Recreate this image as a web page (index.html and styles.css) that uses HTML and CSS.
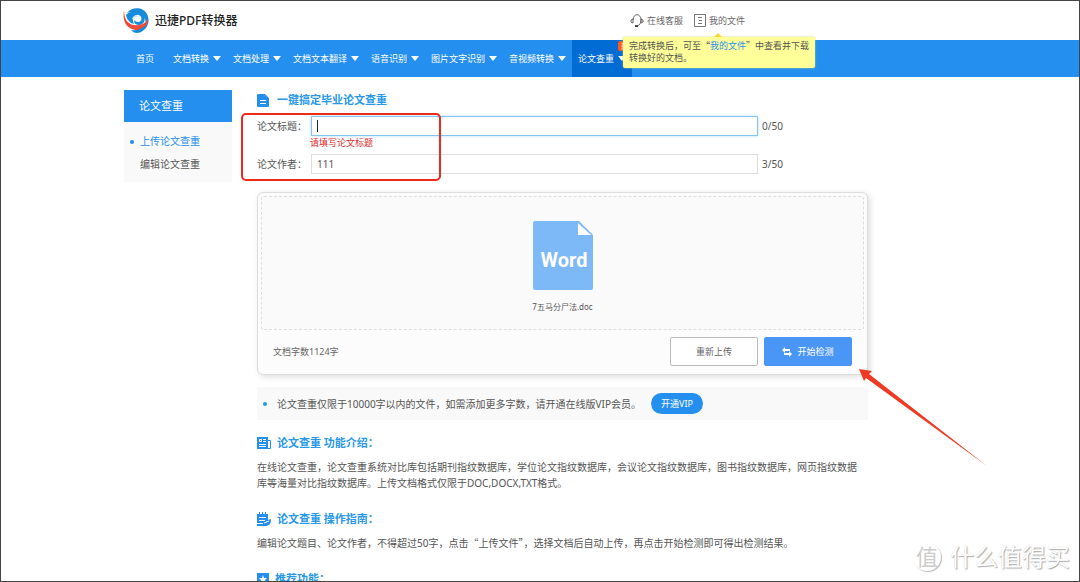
FILE: index.html
```html
<!DOCTYPE html>
<html lang="zh-CN">
<head>
<meta charset="utf-8">
<title>迅捷PDF转换器</title>
<link rel="stylesheet" href="styles.css">
</head>
<body>
<div class="page">
  <header class="header">
    <a class="brand" href="#">
      <svg class="brand-logo" viewBox="0 0 26 26" aria-hidden="true">
        <path fill="#168bd9" d="M4 5C8-1 20-2 24 6c4 8 0 17-9 19 6-4 9-9 7-14C19 4 10 3 4 5z"/>
        <path fill="#168bd9" d="M3 7c1 5 4 8 8 9-3-6 1-10 5-9 4 2 3 7-1 7-2 0-3-1-3-2-2 2 0 5 4 5 5 0 7-6 5-9C17 2 8 2 3 7z"/>
        <path fill="#d5ecfa" d="M9 11c1-4 6-5 8-2-3-1-5 0-6 3z"/>
        <path fill="#ee4b38" d="M1 2c0 8 3 14 10 15 6 1 11-1 14-6 0 7-5 12-12 11C4 21-1 14 1 2z"/>
        <path fill="#168bd9" d="M8 22c6 1 11-1 15-5-2 7-10 11-15 5z"/>
      </svg>
      <span>迅捷PDF转换器</span>
    </a>
    <div class="tools">
      <a class="tool" href="#">
        <svg class="tool-headset" viewBox="0 0 14 14" fill="none" stroke="#666" aria-hidden="true">
          <path d="M3 6c0-7 8-7 8 0 0 3-1 5-4 6M3 5L1 6v2l2 1zM11 5l2 1v2l-2 1z"/>
          <path fill="#444" stroke="none" d="M5 11h3v2H5z"/>
        </svg>
        <span>在线客服</span>
      </a>
      <a class="tool" href="#">
        <svg class="tool-doc" viewBox="0 0 12 13" fill="none" stroke="#777" aria-hidden="true">
          <path d="M.5.5h11v12H.5zM4 3.500h4M5 6.500h3M4 9.500h4"/>
        </svg>
        <span>我的文件</span>
      </a>
      <div class="tip" role="tooltip">
        <div class="tip-line"><span>完成转换后，可至<span class="quote">“</span></span><a href="#">我的文件</a><span><span class="quote">”</span>中查看并下载</span></div>
        <div class="tip-line">转换好的文档。</div>
      </div>
    </div>
  </header>

  <nav class="nav">
    <a class="nav-item nav-home" href="#">首页</a>
    <a class="nav-item has-menu" href="#">文档转换</a>
    <a class="nav-item has-menu" href="#">文档处理</a>
    <a class="nav-item has-menu" href="#">文档文本翻译</a>
    <a class="nav-item has-menu" href="#">语音识别</a>
    <a class="nav-item has-menu" href="#">图片文字识别</a>
    <a class="nav-item has-menu" href="#">音视频转换</a>
    <a class="nav-item has-menu active" href="#">论文查重<span class="badge">新</span></a>
  </nav>

  <div class="body">
    <aside class="sidebar">
      <h2 class="side-title">论文查重</h2>
      <ul class="side-list">
        <li class="current"><a href="#">上传论文查重</a></li>
        <li><a href="#">编辑论文查重</a></li>
      </ul>
    </aside>

    <main class="main">
      <h1 class="title">
        <svg class="icon-file" viewBox="0 0 12 13" aria-hidden="true">
          <path fill="#258ff0" d="M1 0h7l4 4v8a1 1 0 0 1-1 1H1a1 1 0 0 1-1-1V1a1 1 0 0 1 1-1z"/>
          <path stroke="#fff" d="M3 6.500h6M3 9.500h6"/>
        </svg>
        <span>一键搞定毕业论文查重</span>
      </h1>
      <form class="form">
        <div class="fields">
          <div class="row">
            <label for="paper-title">论文标题：</label>
            <div class="control focused"><span class="caret"></span><input id="paper-title" type="text"></div>
            <span class="count">0/50</span>
          </div>
          <p class="error">请填写论文标题</p>
          <div class="row">
            <label for="paper-author">论文作者：</label>
            <div class="control"><input id="paper-author" type="text" value="111"></div>
            <span class="count">3/50</span>
          </div>
          <div class="highlight"></div>
        </div>
        <section class="panel">
          <div class="drop">
            <svg class="word" viewBox="0 0 60 70" aria-hidden="true">
              <path fill="#7db8f7" d="M2 0h44l14 14v53a2 2 0 0 1-2 2H2a2 2 0 0 1-2-2V2a2 2 0 0 1 2-2z"/>
              <path fill="#fff" d="M45 2v12h13z"/>
              <text class="word-text" x="31" y="46" text-anchor="middle">Word</text>
            </svg>
            <span class="filename">7五马分尸法.doc</span>
          </div>
          <div class="actions">
            <span class="words">文档字数1124字</span>
            <button class="btn" type="button">重新上传</button>
            <button class="btn btn-primary" type="button">
              <svg class="icon-swap" viewBox="0 0 10 10" aria-hidden="true">
                <path fill="#fff" d="M0 3l3-3v2h5v2H3v2zM10 7L7 4v2H2v2h5v2z"/>
              </svg>
              <span>开始检测</span>
            </button>
          </div>
          <svg class="pointer" viewBox="0 0 128 98" aria-hidden="true">
            <path fill="#ee3a24" d="M0 0l13 2-3 3 118 92L7 9 5 12z"/>
          </svg>
        </section>
      </form>
      <div class="vip">
        <span>论文查重仅限于10000字以内的文件，如需添加更多字数，请开通在线版VIP会员。</span>
        <button class="vip-btn" type="button">开通VIP</button>
      </div>

      <section class="info">
        <h2 class="subtitle">
          <svg class="icon-sub" viewBox="0 0 14 14" aria-hidden="true">
            <path fill="#258ff0" d="M0 1h11v12H0z"/>
            <path fill="none" stroke="#258ff0" d="M11 4.500h2.500v8H9"/>
            <path fill="none" stroke="#fff" d="M2.500 3.500h2v2h-2zM6 3.500h3M6 5.500h3M2 8.500h7M2 10.500h7"/>
          </svg>
          <span>论文查重 功能介绍：</span>
        </h2>
        <p class="text">在线论文查重，论文查重系统对比库包括期刊指纹数据库，学位论文指纹数据库，会议论文指纹数据库，图书指纹数据库，网页指纹数据库等海量对比指纹数据库。上传文档格式仅限于DOC,DOCX,TXT格式。</p>
      </section>
      <section class="info">
        <h2 class="subtitle">
          <svg class="icon-sub" viewBox="0 0 14 14" aria-hidden="true">
            <path fill="#258ff0" d="M0 2h2V0h1v2h2V0h1v2h2V0h1v2h2v6l3-1c0 5-2 7-6 7H0v-2h6v-1H0z"/>
            <path stroke="#fff" d="M2 5.500h7M2 8.500h6M7 11l5-2"/>
          </svg>
          <span>论文查重 操作指南：</span>
        </h2>
        <p class="text">编辑论文题目、论文作者，不得超过50字，点击<span class="quote">“</span>上传文件<span class="quote">”</span>，选择文档后自动上传，再点击开始检测即可得出检测结果。</p>
      </section>
      <section class="info">
        <h2 class="subtitle">
          <svg class="icon-star" viewBox="0 0 12 13" aria-hidden="true">
            <path fill="#258ff0" d="M0 0h12v13H0z"/>
            <path fill="#fff" d="M6 2l1 3h3L8 7l1 3-3-2-3 2 1-3-2-2h3z"/>
          </svg>
          <span>推荐功能：</span>
        </h2>
      </section>
    </main>
  </div>

  <div class="watermark">
    <span class="mark">值</span>
    <span>什么值得买</span>
  </div>
</div>
</body>
</html>
```
FILE: styles.css
```css
* {
  box-sizing: border-box;
}

body {
  margin: 0;
  background: #fff;
  color: #555;
  font-family: "Noto Sans", "Noto Sans CJK SC", sans-serif;
  font-size: 10px;
  line-height: 16px;
}

h1, h2, p, ul {
  margin: 0;
  padding: 0;
}

a {
  color: inherit;
  text-decoration: none;
}

button, input {
  font: inherit;
  color: inherit;
}

svg {
  display: block;
  flex: none;
}

.quote {
  font-family: "Noto Sans CJK SC", sans-serif;
}

.page {
  position: relative;
  height: 100vh;
  overflow: hidden;
  border: 1px solid #444;
}

.header {
  display: flex;
  align-items: center;
  height: 39px;
  padding-left: 122px;
}

.brand {
  display: flex;
  align-items: center;
  gap: 6px;
  width: 507px;
  color: #222;
  font-size: 12px;
  font-weight: 500;
}

.brand-logo {
  width: 26px;
  height: 26px;
}

.tools {
  position: relative;
  display: flex;
  gap: 11px;
  color: #666;
  font-size: 9px;
}

.tool {
  display: flex;
  align-items: center;
  gap: 3px;
}

.tool-headset {
  width: 14px;
  height: 14px;
}

.tool-doc {
  width: 12px;
  height: 13px;
}

.tip {
  position: absolute;
  z-index: 2;
  top: 24px;
  left: -7px;
  width: 192px;
  padding: 3px 6px 4px;
  border-radius: 2px;
  background: #ffff99;
  box-shadow: 0 0 2px #cccc66;
  color: #555;
  line-height: 12px;
}

.tip-line {
  display: flex;
  white-space: nowrap;
}

.tip::before {
  content: "";
  position: absolute;
  top: -4px;
  left: 91px;
  border: 4px solid transparent;
  border-top: 0;
  border-bottom-color: #ffd52e;
}

.tip a {
  color: #258ff0;
}

.nav {
  display: flex;
  height: 37px;
  padding-left: 129px;
  background: #258ff0;
  color: #fff;
  font-size: 9px;
}

.nav-item {
  position: relative;
  display: flex;
  align-items: center;
  gap: 4px;
  padding: 0 6px;
  white-space: nowrap;
}

.nav-home {
  padding-right: 13px;
}

.has-menu::after {
  content: "";
  border: 4px solid transparent;
  border-top: 5px solid #fff;
  border-bottom: 0;
}

.active {
  background: #006cd4;
}

.badge {
  position: absolute;
  top: 1px;
  right: 0;
  width: 14px;
  border-radius: 2px;
  background: #ff5a1f;
  font-size: 8px;
  line-height: 10px;
  padding-left: 3px;
}

.body {
  display: flex;
  gap: 25px;
  max-width: 867px;
  padding: 13px 0 0 123px;
}

.sidebar {
  flex: none;
  width: 108px;
}

.side-title {
  padding: 8px 15px;
  background: #258ff0;
  color: #fff;
  font-size: 11px;
  font-weight: 400;
}

.side-list {
  padding: 8px 0 6px;
  background: #f9f9f9;
  list-style: none;
  line-height: 23px;
}

.side-list li {
  padding-left: 16px;
}

.side-list .current {
  display: flex;
  align-items: center;
  gap: 6px;
  padding-left: 6px;
  color: #258ff0;
}

.current::before {
  content: "";
  width: 4px;
  height: 4px;
  border-radius: 50%;
  background: #258ff0;
}

.main {
  flex: 1;
  min-width: 0;
}

.title, .subtitle {
  display: flex;
  align-items: center;
  gap: 8px;
  color: #2a98e8;
  font-size: 11px;
  font-weight: 700;
  line-height: 20px;
}

.icon-file, .icon-star {
  width: 12px;
  height: 13px;
}

.icon-sub {
  width: 14px;
  height: 14px;
}

.subtitle {
  gap: 6px;
}

.fields {
  position: relative;
  padding-top: 6px;
}

.row {
  display: flex;
  align-items: center;
}

.row label {
  width: 54px;
  white-space: nowrap;
}

.control {
  position: relative;
  flex: 1;
  max-width: 447px;
}

.control input {
  display: block;
  width: 100%;
  height: 20px;
  padding: 0 5px;
  border: 1px solid #ddd;
  outline: 0;
  background: #fff;
}

.focused input {
  border-color: #85c4f2;
  box-shadow: 0 0 3px #b5dcf7;
}

.caret {
  position: absolute;
  top: 4px;
  left: 6px;
  width: 1px;
  height: 12px;
  background: #222;
}

.count {
  margin-left: 4px;
}

.error {
  padding: 0 0 4px 53px;
  color: #dc2828;
  font-size: 9px;
  line-height: 14px;
}

.highlight {
  position: absolute;
  top: 3px;
  left: -16px;
  width: 200px;
  height: 68px;
  border: 2px solid #ee2a18;
  border-radius: 5px;
  pointer-events: none;
}

.panel {
  position: relative;
  margin-top: 18px;
  padding: 3px 3px 8px;
  border: 1px solid #ddd;
  border-radius: 6px;
  background: #fcfcfc;
  box-shadow: 2px 2px 6px #ddd;
}

.drop {
  display: flex;
  flex-direction: column;
  align-items: center;
  gap: 8px;
  height: 134px;
  padding-top: 24px;
  border: 1px dashed #ddd;
  border-radius: 3px;
  background: #fafafa;
}

.word {
  width: 60px;
  height: 70px;
}

.word-text {
  fill: #fff;
  font-family: Roboto, sans-serif;
  font-size: 20px;
  font-weight: 700;
}

.filename {
  font-size: 8px;
}

.actions {
  display: flex;
  align-items: center;
  gap: 6px;
  padding: 7px 12px 0;
}

.words {
  flex: 1;
  color: #666;
  font-size: 9px;
}

.btn {
  display: flex;
  align-items: center;
  justify-content: center;
  gap: 5px;
  width: 88px;
  height: 29px;
  padding: 0;
  border: 1px solid #bbb;
  border-radius: 2px;
  background: #fff;
  color: #666;
  font-size: 9px;
}

.btn-primary {
  border-color: #4a96f7;
  background: #4a96f7;
  color: #fff;
}

.icon-swap {
  width: 10px;
  height: 10px;
}

.pointer {
  position: absolute;
  z-index: 2;
  top: 176px;
  left: 601px;
  width: 128px;
  height: 98px;
}

.vip {
  display: flex;
  align-items: center;
  gap: 10px;
  margin-top: 12px;
  padding: 6px;
  background: #f9f9f9;
}

.vip::before {
  content: "";
  width: 4px;
  height: 4px;
  border-radius: 50%;
  background: #2a98e8;
}

.vip-btn {
  height: 21px;
  padding: 0 10px;
  border: 0;
  border-radius: 11px;
  background: #258ff0;
  color: #fff;
  font-size: 9px;
}

.info {
  margin-top: 13px;
}

.info + .info {
  margin-top: 18px;
}

.text {
  padding: 6px 4px 0 0;
}

.watermark {
  position: absolute;
  right: 9px;
  bottom: 9px;
  display: flex;
  align-items: center;
  gap: 9px;
  color: #fff;
  font-size: 24px;
  line-height: 30px;
  text-shadow: 1px 1px 1px #aaa, 0 0 1px #ccc;
}

.mark {
  width: 28px;
  height: 28px;
  border-radius: 50%;
  box-shadow: 1px 1px 1px #bbb;
  color: #ccc;
  font-size: 22px;
  line-height: 27px;
  text-align: center;
  text-shadow: none;
}
```
